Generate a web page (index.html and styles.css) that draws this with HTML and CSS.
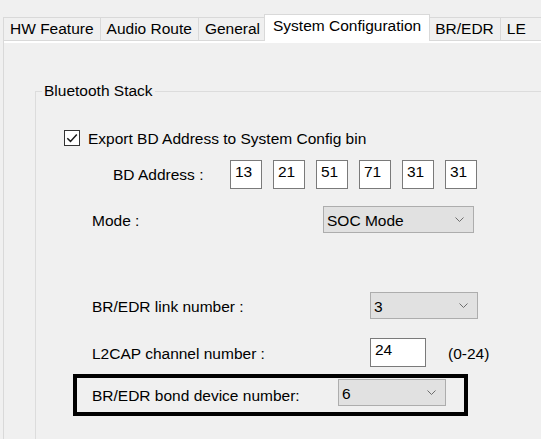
FILE: index.html
```html
<!DOCTYPE html>
<html>
<head>
<meta charset="utf-8">
<link rel="stylesheet" href="styles.css">
</head>
<body>
<div class="tabs">
  <div class="tab">HW Feature</div>
  <div class="tab">Audio Route</div>
  <div class="tab">General</div>
  <div class="tab active">System Configuration</div>
  <div class="tab">BR/EDR</div>
  <div class="tab last">LE</div>
</div>
<div class="panel">
  <div class="page">
    <fieldset class="group">
      <legend class="group-title">Bluetooth Stack</legend>

      <div class="row check-row">
        <span class="checkbox">
          <svg width="14" height="14" viewBox="0 0 14 14"><path d="M2.3 7.2 L5.5 10.4 L11.8 3.4" fill="none" stroke="#1a1a1a" stroke-width="1.5"/></svg>
        </span>
        <span class="check-text">Export BD Address to System Config bin</span>
      </div>

      <div class="row addr-row">
        <span class="addr-label">BD Address :</span>
        <div class="addr-boxes">
          <span class="textbox addr">13</span>
          <span class="textbox addr">21</span>
          <span class="textbox addr">51</span>
          <span class="textbox addr">71</span>
          <span class="textbox addr">31</span>
          <span class="textbox addr">31</span>
        </div>
      </div>

      <div class="row mode-row">
        <span class="lbl lbl-mode">Mode :</span>
        <div class="combo combo-mode"><span class="combo-text">SOC Mode</span><svg class="chev" width="9" height="5" viewBox="0 0 9 5"><path d="M0.5 0.5 L4.5 4.5 L8.5 0.5" fill="none" stroke="#6d6d6d" stroke-width="1"/></svg></div>
      </div>

      <div class="row link-row">
        <span class="lbl lbl-wide">BR/EDR link number :</span>
        <div class="combo combo-small"><span class="combo-text">3</span><svg class="chev" width="9" height="5" viewBox="0 0 9 5"><path d="M0.5 0.5 L4.5 4.5 L8.5 0.5" fill="none" stroke="#6d6d6d" stroke-width="1"/></svg></div>
      </div>

      <div class="row l2cap-row">
        <span class="lbl lbl-wide">L2CAP channel number :</span>
        <span class="textbox l2cap">24</span>
        <span class="range">(0-24)</span>
      </div>

      <div class="highlight">
        <span class="lbl lbl-bond">BR/EDR bond device number:</span>
        <div class="combo combo-small"><span class="combo-text">6</span><svg class="chev" width="9" height="5" viewBox="0 0 9 5"><path d="M0.5 0.5 L4.5 4.5 L8.5 0.5" fill="none" stroke="#6d6d6d" stroke-width="1"/></svg></div>
      </div>
    </fieldset>
  </div>
</div>
</body>
</html>
```
FILE: styles.css
```css
html, body {
  margin: 0;
  padding: 0;
}
body {
  background: #f0f0f0;
  font-family: "Liberation Sans", Arial, sans-serif;
  font-size: 15.5px;
  color: #000;
  width: 541px;
  height: 439px;
  overflow: hidden;
}

/* Tabs */
.tabs {
  display: flex;
  align-items: flex-end;
  height: 26px;
  padding: 14px 0 0 3px;
}
.tab {
  box-sizing: border-box;
  height: 23px;
  line-height: 22px;
  padding: 0 6px;
  border: 1px solid #d9d9d9;
  border-bottom: none;
  margin-right: -1px;
  background: #f0f0f0;
  white-space: nowrap;
}
.tab.active {
  position: relative;
  z-index: 1;
  height: 27px;
  margin: 0 -2px -1px -2px;
  padding: 0 8px;
  background: #fff;
}
.tab.last {
  flex: 1;
}

/* Panel */
.panel {
  margin-left: 3px;
  border-top: 1px solid #d9d9d9;
  border-left: 1px solid #d9d9d9;
  padding-top: 2px;
  background: #fff;
}
.page {
  background: #f0f0f0;
  height: 396px;
  overflow: hidden;
}

/* Group box */
.group {
  margin: 39px 0 0 31px;
  padding: 0;
  border: 1px solid #dcdcdc;
  width: 560px;
  min-width: 0;
  height: 380px;
  box-sizing: border-box;
}
.group-title {
  margin-left: 6px;
  padding: 0 2px;
  line-height: 18px;
}

.row {
  display: flex;
  align-items: center;
}

/* Checkbox */
.check-row {
  margin: 30px 0 0 28px;
  height: 16px;
}
.checkbox {
  box-sizing: border-box;
  width: 16px;
  height: 16px;
  border: 1px solid #333;
  background: #fff;
  display: flex;
  align-items: center;
  justify-content: center;
}
.check-text {
  margin-left: 8px;
  line-height: 18px;
  padding-top: 1px;
}

/* Address */
.addr-row {
  margin: 14px 0 0 77px;
  height: 29px;
}
.addr-label {
  width: 117px;
}
.addr-boxes {
  display: flex;
  gap: 11px;
}
.textbox {
  display: block;
  box-sizing: border-box;
  height: 29px;
  border: 1px solid #7a7a7a;
  background: #fff;
  padding: 2px 0 0 4px;
  line-height: 18px;
}
.textbox.addr {
  width: 32px;
}

/* Labels */
.lbl {
  flex: none;
  padding-top: 2px;
}
.lbl-mode {
  width: 231px;
}
.lbl-wide {
  width: 278px;
}
.lbl-bond {
  width: 246px;
  padding-top: 3px;
}

.mode-row {
  margin: 17px 0 0 56px;
  height: 27px;
}
.link-row {
  margin: 59px 0 0 56px;
  height: 27px;
}
.l2cap-row {
  margin: 19px 0 0 56px;
  height: 29px;
}
.textbox.l2cap {
  width: 56px;
}
.range {
  margin-left: 22px;
  padding-top: 2px;
}

/* Combo box */
.combo {
  box-sizing: border-box;
  height: 27px;
  border: 1px solid #adadad;
  background: #e1e1e1;
  display: flex;
  align-items: center;
  justify-content: space-between;
  padding: 0 9px 0 3px;
}
.combo-text {
  padding-top: 2px;
}
.combo-mode {
  width: 151px;
}
.combo-small {
  width: 108px;
}

/* Annotation highlight */
.highlight {
  box-sizing: border-box;
  display: flex;
  align-items: flex-start;
  margin: 7px 0 0 37px;
  width: 395px;
  height: 42px;
  border: 4px solid #000;
  padding: 1px 0 0 15px;
}
.highlight .lbl {
  line-height: 27px;
}
```
